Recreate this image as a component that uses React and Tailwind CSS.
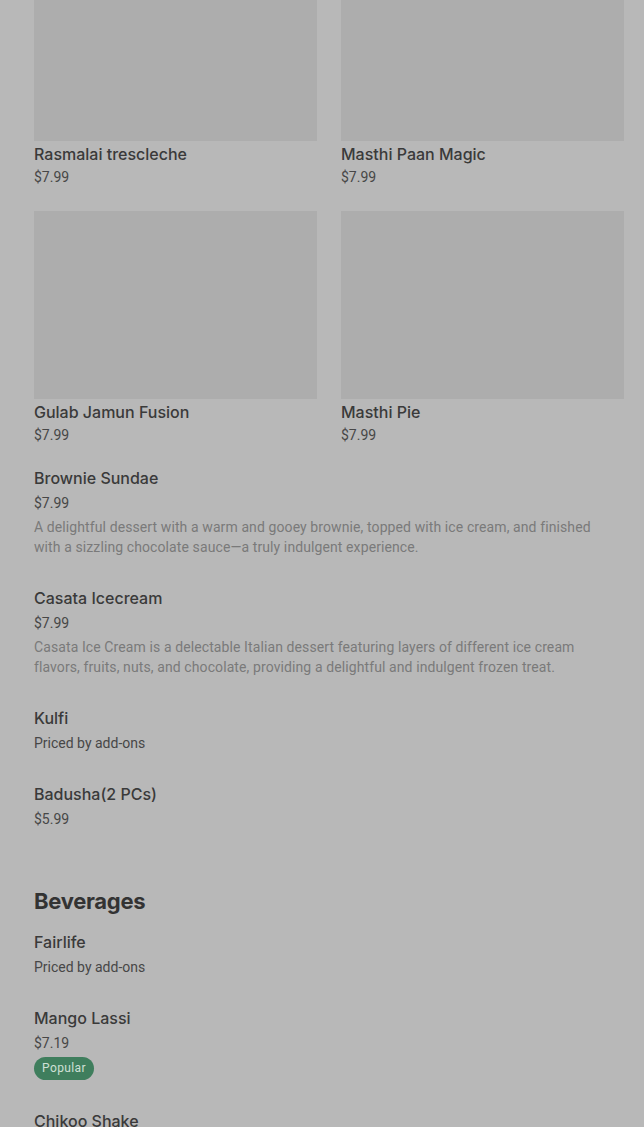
import React from "react";

const grid = [
  { name: "Rasmalai trescleche", price: "$7.99" },
  { name: "Masthi Paan Magic", price: "$7.99" },
  { name: "Gulab Jamun Fusion", price: "$7.99" },
  { name: "Masthi Pie", price: "$7.99" },
];

const roboto = { fontFamily: "Roboto, 'Noto Sans', sans-serif" };

function Item({ title, price, desc, badge }) {
  return (
    <div className="flex flex-col">
      <div className="h-6 leading-6 text-[16px] font-medium text-[#3a3a3a]">{title}</div>
      <div className="mt-[3px] h-5 leading-5 text-[14px] text-[#474747]" style={roboto}>{price}</div>
      {desc && (
        <div className="mt-1 pr-[20px] text-[14px] leading-5 tracking-[0.1px] text-[#7a7a7a]" style={roboto}>
          {desc}
        </div>
      )}
      {badge && (
        <div className="mt-1 flex">
          <span
            className="h-[23px] px-[8px] rounded-full bg-[#3f7e5d] text-[#cfe0d6] text-[12px] tracking-[0.4px] leading-[23px]"
            style={roboto}
          >
            {badge}
          </span>
        </div>
      )}
    </div>
  );
}

export default function App() {
  return (
    <div
      className="w-[644px] h-[1127px] overflow-hidden bg-[#b8b8b8]"
      style={{ fontFamily: "Inter, 'Noto Sans', sans-serif" }}
    >
      <div className="pl-[34px] pr-[20px] -mt-[47px]">
        <div className="grid grid-cols-2 gap-x-6 gap-y-6">
          {grid.map((g) => (
            <div key={g.name} className="flex flex-col">
              <div className="h-[188px] bg-[#adadad]" />
              <div className="mt-[1px] h-6 leading-6 text-[16px] font-medium text-[#3a3a3a]">{g.name}</div>
              <div className="mt-[1px] h-5 leading-5 text-[14px] text-[#474747]" style={roboto}>{g.price}</div>
            </div>
          ))}
        </div>
        <div className="mt-[21px] flex flex-col gap-[29px]">
          <Item
            title="Brownie Sundae"
            price="$7.99"
            desc="A delightful dessert with a warm and gooey brownie, topped with ice cream, and finished with a sizzling chocolate sauce—a truly indulgent experience."
          />
          <Item
            title="Casata Icecream"
            price="$7.99"
            desc="Casata Ice Cream is a delectable Italian dessert featuring layers of different ice cream flavors, fruits, nuts, and chocolate, providing a delightful and indulgent frozen treat."
          />
          <Item title="Kulfi" price="Priced by add-ons" />
          <Item title="Badusha(2 PCs)" price="$5.99" />
        </div>
        <div className="mt-[56px] h-8 leading-8 text-[22px] font-bold tracking-[-0.3px] text-[#333333]">
          Beverages
        </div>
        <div className="mt-[13px] flex flex-col gap-[29px]">
          <Item title="Fairlife" price="Priced by add-ons" />
          <Item title="Mango Lassi" price="$7.19" badge="Popular" />
          <Item title="Chikoo Shake" price="$7.99" />
        </div>
      </div>
    </div>
  );
}
